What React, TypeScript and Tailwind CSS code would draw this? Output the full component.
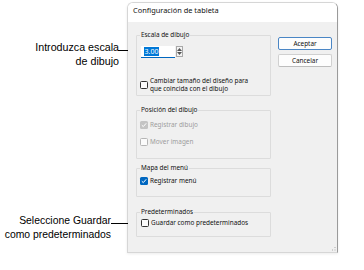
import React from "react";

const ui = { fontFamily: '"Noto Sans", "Open Sans", sans-serif' };
const arial = { fontFamily: '"Liberation Sans", Arial, sans-serif' };

function Check({ state }: { state: "off" | "on" | "disabledOn" | "disabledOff" }) {
  if (state === "on" || state === "disabledOn") {
    const bg = state === "on" ? "bg-[#0067c0]" : "bg-[#c4c4c4]";
    return (
      <div className={`w-[8px] h-[8px] rounded-[1.5px] ${bg} flex items-center justify-center shrink-0`}>
        <svg width="6" height="6" viewBox="0 0 6 6">
          <polyline points="0.8,3.2 2.3,4.6 5.2,1.3" fill="none" stroke="#fff" strokeWidth="1" />
        </svg>
      </div>
    );
  }
  const border = state === "off" ? "border-[#333333]" : "border-[#b5b5b5]";
  return <div className={`w-[8px] h-[8px] rounded-[1.5px] border ${border} bg-[#fbfbfb] shrink-0`} />;
}

function Group({ label, className, children }: { label: string; className: string; children?: React.ReactNode }) {
  return (
    <div className={`border border-[#dcdcdc] rounded-[1px] ${className}`}>
      <div className="-mt-[6px] ml-[3px] px-[1px] w-fit bg-[#f0f0f0] leading-[10px]">{label}</div>
      {children}
    </div>
  );
}

export default function App() {
  return (
    <div className="relative w-[364px] h-[270px] bg-white overflow-hidden">
      {/* callout 1 */}
      <div className="absolute left-0 top-[41px] w-[119px] text-right text-[10.7px] leading-[13.5px] text-black" style={arial}>
        Introduzca escala
        <br />
        de dibujo
      </div>
      <div className="absolute left-[118px] top-[47px]">
        <svg width="26" height="7" viewBox="0 0 26 7">
          <line x1="0" y1="3.5" x2="25" y2="3.5" stroke="#000" strokeWidth="1" />
          <polyline points="21,1.5 25,3.5 21,5.5" fill="none" stroke="#000" strokeWidth="0.8" />
        </svg>
      </div>
      {/* callout 2 */}
      <div className="absolute left-0 top-[214px] w-[111px] text-right text-[10.4px] leading-[13.5px] text-black" style={arial}>
        Seleccione Guardar
        <br />
        como predeterminados
      </div>
      <div className="absolute left-[111px] top-[220px]">
        <svg width="30" height="7" viewBox="0 0 30 7">
          <line x1="0" y1="3.5" x2="29" y2="3.5" stroke="#000" strokeWidth="1" />
          <polyline points="25,1.5 29,3.5 25,5.5" fill="none" stroke="#000" strokeWidth="0.8" />
        </svg>
      </div>

      <div className="pl-[127px] pt-[2px]">
        <div
          className="w-[211px] h-[251px] flex flex-col rounded-t-[6px] border border-[#d6d6d6] border-r-[#9a9a9a] overflow-hidden text-[6.4px] text-[#111111] shadow-[0_1px_3px_rgba(0,0,0,0.08)]"
          style={ui}
        >
          <div className="h-[19px] bg-white flex items-center pl-[5px] pb-[3px] text-[7.4px]">Configuración de tableta</div>
          <div className="relative flex-1 bg-[#f0f0f0] flex pl-[8px] pt-[13px]">
            <div className="w-[135px] flex flex-col">
              <Group label="Escala de dibujo" className="h-[61px]">
                <div className="flex items-start mt-[6px] ml-[4px]">
                  <div className="w-[34px] h-[12px] bg-white border-b-[1.5px] border-[#0067c0] flex items-center pl-[3px] text-[7px]">
                    <span className="bg-[#0078d7] text-white leading-[9px] px-[0.5px]">3.00</span>
                  </div>
                  <div className="ml-[1px] w-[7px] h-[11px] border border-[#a8a8a8] bg-[#f4f4f4] flex flex-col items-center justify-center gap-[1px]">
                    <svg width="5" height="3" viewBox="0 0 5 3"><polygon points="0,3 2.5,0 5,3" fill="#555" /></svg>
                    <svg width="5" height="3" viewBox="0 0 5 3"><polygon points="0,0 2.5,3 5,0" fill="#555" /></svg>
                  </div>
                </div>
                <div className="flex items-center mt-[19px] ml-[3px] gap-[2px]">
                  <Check state="off" />
                  <div className="leading-[8px]">
                    Cambiar tamaño del diseño para
                    <br />
                    que coincida con el dibujo
                  </div>
                </div>
              </Group>
              <Group label="Posición del dibujo" className="mt-[14px] h-[49px]">
                <div className="flex items-center mt-[5px] ml-[3px] gap-[2px] text-[#9d9d9d]">
                  <Check state="disabledOn" />
                  <span className="leading-[10px]">Registrar dibujo</span>
                </div>
                <div className="flex items-center mt-[7px] ml-[3px] gap-[2px] text-[#9d9d9d]">
                  <Check state="disabledOff" />
                  <span className="leading-[10px]">Mover imagen</span>
                </div>
              </Group>
              <Group label="Mapa del menú" className="mt-[9px] h-[29px]">
                <div className="flex items-center mt-[3px] ml-[3px] gap-[2px]">
                  <Check state="on" />
                  <span className="leading-[10px]">Registrar menú</span>
                </div>
              </Group>
              <Group label="Predeterminados" className="mt-[15px] h-[25px]">
                <div className="flex items-center mt-[1px] ml-[4px] gap-[2px]">
                  <Check state="off" />
                  <span className="leading-[10px]">Guardar como predeterminados</span>
                </div>
              </Group>
            </div>
            <div className="ml-[7px] mt-[2px] w-[54px] flex flex-col gap-[4px]">
              <div className="h-[13px] rounded-[2px] border border-[#4a86c5] bg-[#fdfdfd] flex items-center justify-center">Aceptar</div>
              <div className="h-[13px] rounded-[2px] border border-[#d0d0d0] border-b-[#bdbdbd] bg-[#fdfdfd] flex items-center justify-center">Cancelar</div>
            </div>
            <div className="absolute right-[1px] bottom-[1px]">
              <svg width="4" height="4" viewBox="0 0 4 4"><rect x="2.5" y="0" width="1" height="1" fill="#aaa" /><rect x="0" y="2.5" width="1" height="1" fill="#aaa" /><rect x="2.5" y="2.5" width="1" height="1" fill="#aaa" /></svg>
            </div>
          </div>
        </div>
      </div>
    </div>
  );
}
